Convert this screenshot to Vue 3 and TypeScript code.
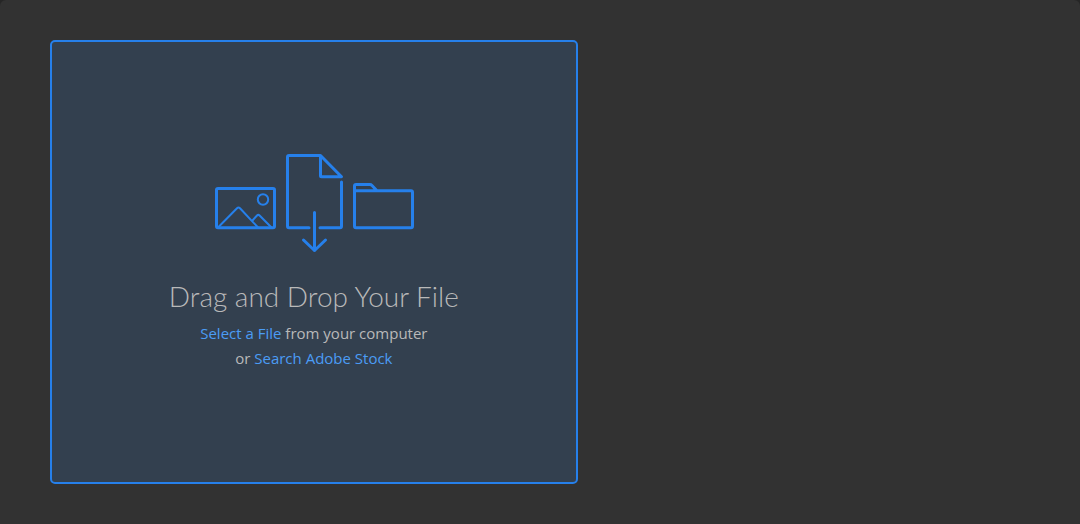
<script setup lang="ts">
import { ref } from 'vue'

const picker = ref<HTMLInputElement | null>(null)
const dragging = ref(false)

function openPicker(): void {
  picker.value?.click()
}
</script>

<template>
  <main class="dialog">
    <section
      class="drop-zone"
      :class="{ dragging }"
      @dragover.prevent="dragging = true"
      @dragleave="dragging = false"
      @drop.prevent="dragging = false"
    >
      <svg class="art" viewBox="0 0 202 100" width="202" height="100" aria-hidden="true">
        <g class="bold">
          <rect x="3.5" y="35.5" width="58" height="39.2" rx="1.5" />
          <path d="M96 74.700H76a1.500 1.500 0 0 1-1.500-1.500V4a1.500 1.500 0 0 1 1.500-1.500h31.500L128.500 23.800h-20a1 1 0 0 1-1-1V2.500M128.500 29V73.200a1.500 1.500 0 0 1-1.500 1.500H107" />
          <path d="M101.500 59.500V97.500M90.500 87 101.500 97.500 112.500 87" />
          <path d="M141.500 37.700V73.200a1.500 1.500 0 0 0 1.500 1.500h55a1.500 1.500 0 0 0 1.500-1.500V39.200a1.500 1.500 0 0 0-1.500-1.500H141.500V33a1.500 1.500 0 0 1 1.500-1.500h14q1 0 2 1l4.500 4.700" />
        </g>
        <g class="fine">
          <circle cx="50" cy="46.500" r="5.200" />
          <path d="M5 74.500 24 55.200q1.500-1.500 3 0L45 74.500M39.500 67.500l4.500-5q1.300-1.300 2.600 0L58.500 74.500" />
        </g>
      </svg>
      <h1>Drag and Drop Your File</h1>
      <p><a href="#" @click.prevent="openPicker">Select a File</a> from your computer</p>
      <p>or <a href="#stock">Search Adobe Stock</a></p>
      <input ref="picker" type="file" aria-label="Select a File" hidden />
    </section>
  </main>
</template>

<style>
body {
  margin: 0;
  background: #262626;
}
</style>

<style scoped>
.dialog {
  box-sizing: border-box;
  min-height: 100vh;
  padding: 40px 50px;
  display: grid;
  grid-template-columns: 7fr 6fr;
  background: #323232;
  border-radius: 6px 6px 0 0;
  color: #b9b9b9;
  font-family: "Open Sans", "Noto Sans", sans-serif;
}

.drop-zone {
  box-sizing: border-box;
  display: flex;
  flex-direction: column;
  align-items: center;
  justify-content: center;
  padding: 16px;
  border: 2px solid #2680eb;
  border-radius: 5px;
  background: #33404f;
  text-align: center;
}

.dragging {
  background: #384961;
}

.art {
  flex: none;
  fill: none;
  stroke: #2680eb;
  stroke-linecap: round;
  stroke-linejoin: round;
}

.bold {
  stroke-width: 3;
}

.fine {
  stroke-width: 2;
}

h1 {
  margin: 23px 0 5px;
  font-family: Lato, "Open Sans", sans-serif;
  font-size: 28px;
  font-weight: 300;
  line-height: 40px;
}

p {
  margin: 0;
  font-size: 15px;
  line-height: 25px;
}

a {
  color: #4b9cf5;
  text-decoration: none;
}
</style>
